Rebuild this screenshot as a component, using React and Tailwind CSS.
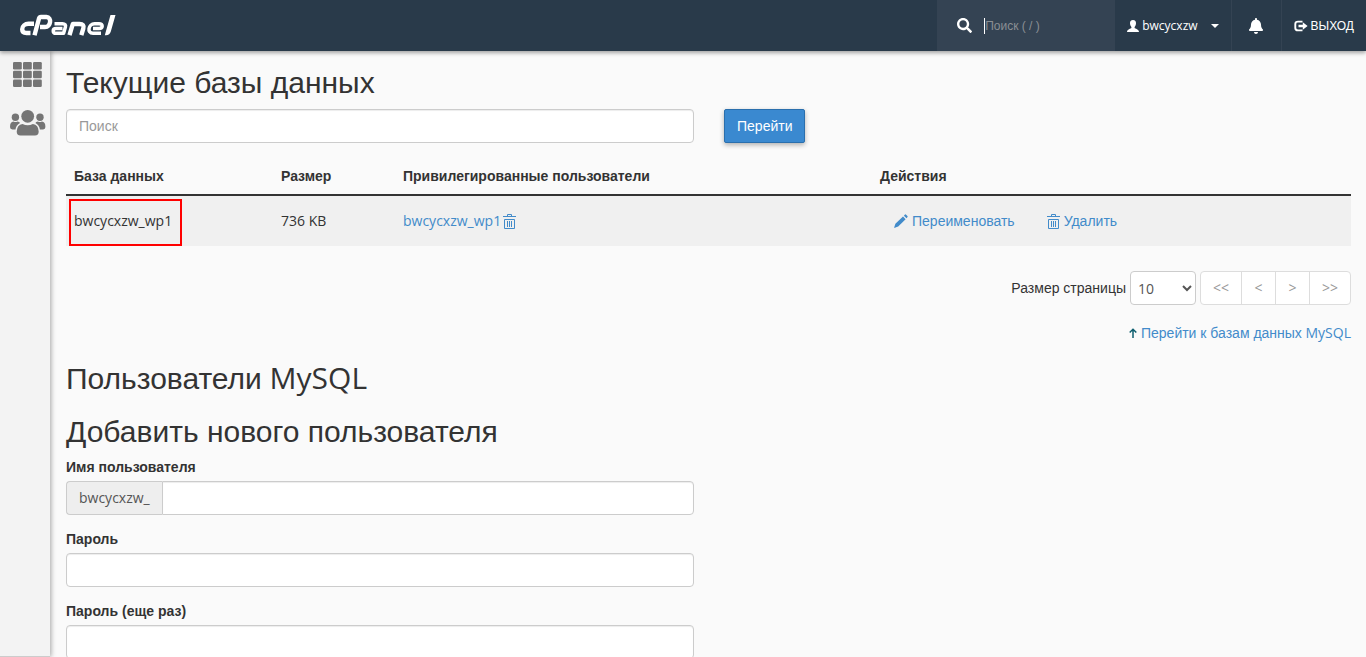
import { FaSearch, FaBell } from "react-icons/fa";

const MIXED = "font-['Open_Sans','Liberation_Sans',sans-serif]";
const CYR = "font-['Liberation_Sans',Arial,sans-serif]";

const INPUT =
  "h-[34px] w-full rounded border border-[#cccccc] bg-white px-3 text-sm text-[#555555] shadow-[inset_0_1px_1px_rgba(0,0,0,0.075)] outline-none";

const Logo = () => (
  <svg viewBox="0 0 96 24" className="h-6 w-24" fill="none" stroke="#fff" strokeWidth="4.4" strokeLinejoin="round" aria-label="cPanel">
    <path d="M14 9.800H8.500C5 9.800 2.200 12 2.200 15.300C2.200 17.800 4 19 6.500 19H10.500" />
    <path d="M14.500 21.200L19 4.500Q19.500 3 21 3H26.500C32 3 31 13 25 13H20" />
    <path d="M34.500 9.700H42.500C45 9.700 46 11 45.400 13L43.600 19.300H36C32.300 19.300 32.300 14.500 36 14.500H42.500" strokeWidth="3.500" />
    <path d="M49.500 21.200L52.800 10H59.500C63 10 64.200 11.500 63.300 14.500L61.300 21.200" />
    <path d="M81 19.200H73C66.500 19.200 68.500 9.700 74.500 9.700H79C83.500 9.700 83 14.500 79 14.500H73" strokeWidth="3.500" />
    <path d="M90.500 1H95.500L90.800 17.500Q89.800 21.200 86 21.200H84.800Z" fill="#fff" stroke="none" />
  </svg>
);

const GridIcon = () => (
  <svg viewBox="0 0 29 25" className="h-[25px] w-[29px]" fill="#757575">
    {[0, 8.7, 17.4].map((y) =>
      [0, 10, 20].map((x) => <rect key={`${x}-${y}`} x={x} y={y} width="8.8" height="7.6" rx="1.3" />)
    )}
  </svg>
);

const UsersIcon = () => (
  <svg viewBox="0 0 36 28" className="h-7 w-9" fill="#757575">
    <circle cx="17.7" cy="7.300" r="6.400" />
    <circle cx="5.400" cy="8.300" r="3.700" />
    <circle cx="30" cy="8.300" r="3.700" />
    <path d="M6.700 22.500Q7 15.500 12.500 15Q17.700 17.600 22.900 15Q28.400 15.500 28.700 22.500Q28.700 26.600 25 26.600H10.400Q6.700 26.600 6.700 22.500Z" />
    <path d="M0 18Q0 12.800 3.500 12.600Q5.500 13.600 7.500 12.600Q9.500 12.800 10 14Q6 16.500 5.500 20.400H2.300Q0 20.400 0 18Z" />
    <path d="M35.400 18Q35.400 12.800 31.900 12.600Q29.900 13.600 27.900 12.600Q25.900 12.800 25.400 14Q29.400 16.500 29.900 20.400H33.100Q35.400 20.400 35.400 18Z" />
  </svg>
);

const UserIcon = () => (
  <svg viewBox="0 0 12 12" className="h-3 w-3" fill="currentColor">
    <path d="M6 0C8.200 0 9.100 1.500 9 3.500C8.900 5.400 8 6.300 7.600 7V8C8.200 8.700 11.900 9.300 12 12H0C.1 9.300 3.800 8.700 4.400 8V7C4 6.300 3.100 5.400 3 3.500C2.900 1.500 3.800 0 6 0Z" />
  </svg>
);

const LogoutIcon = () => (
  <svg viewBox="0 0 14 12" className="h-3 w-3.5" fill="currentColor">
    <path d="M8.500 1.600H4Q1.300 1.600 1.300 4V8Q1.300 10.400 4 10.400H8.500" fill="none" stroke="currentColor" strokeWidth="1.900" />
    <path d="M4.500 4.700H8.800V2.200L13.600 6L8.800 9.800V7.300H4.500Z" />
  </svg>
);

const TrashIcon = () => (
  <svg viewBox="0 0 13 15" className="h-[15px] w-[13px] shrink-0" fill="none" stroke="currentColor">
    <path d="M4.500 2.500V.5H8.500V2.500M0 2.500H13" />
    <path d="M1.500 5.500H11.500V14.500H1.500ZM4.500 7V13M6.500 7V13M8.500 7V13" />
  </svg>
);

const PencilIcon = () => (
  <svg viewBox="0 0 14 14" className="h-3.5 w-3.5 shrink-0" fill="currentColor">
    <path d="M0 14L1.400 9.800L9 2.600L11.600 5.200L4.200 12.600ZM9.900 1.700L11 .6Q11.500.1 12.100.7L13.400 2Q14 2.600 13.500 3.100L12.500 4.200Z" />
  </svg>
);

const UpArrow = () => (
  <svg viewBox="0 0 8 10" className="h-2.5 w-2 shrink-0" fill="none" stroke="#0f5f6f" strokeWidth="1.500">
    <path d="M4 10V1M.7 4.500L4 1.200L7.300 4.500" />
  </svg>
);

const Header = () => (
  <header className="relative z-20 flex h-[51px] shrink-0 items-stretch bg-[#293a4a] text-white shadow-[0_2px_4px_rgba(0,0,0,0.35)]">
    <a href="#home" className="flex items-center pl-5">
      <Logo />
    </a>
    <div className="ml-auto flex w-[178px] items-center gap-3 bg-[#344353] pl-5">
      <FaSearch className="h-[15px] w-[15px]" />
      <input
        type="text"
        aria-label="Поиск"
        placeholder="Поиск ( / )"
        className={`h-4 w-32 border-l border-white bg-transparent text-xs outline-none placeholder:text-[#8b8f94] ${CYR}`}
      />
    </div>
    <button type="button" className="flex items-center gap-[3px] px-3 text-xs">
      <UserIcon />
      <span>bwcycxzw</span>
      <span className="ml-2.5 border-x-4 border-t-4 border-x-transparent border-t-white" />
    </button>
    <button type="button" aria-label="Уведомления" className="flex w-[50px] items-center justify-center border-l border-[#344353]">
      <FaBell className="h-4 w-4" />
    </button>
    <a href="#logout" className={`flex items-center gap-[3px] border-l border-[#344353] px-3 text-xs ${CYR}`}>
      <LogoutIcon />
      ВЫХОД
    </a>
  </header>
);

const Sidebar = () => (
  <nav className="flex w-[50px] shrink-0 flex-col items-center gap-[22px] border-b border-[#cccccc] bg-[#f3f3f3] pt-[11px] pl-[5px] shadow-[1px_0_5px_rgba(0,0,0,0.35)]">
    <a href="#tools" aria-label="Инструменты">
      <GridIcon />
    </a>
    <a href="#users" aria-label="Пользователи">
      <UsersIcon />
    </a>
  </nav>
);

const Field = ({ id, label, type = "text", prefix }) => (
  <div className="mb-[15px]">
    <label htmlFor={id} className={`mb-1 block text-sm leading-[19px] font-bold ${CYR}`}>
      {label}
    </label>
    <div className="flex">
      {prefix && (
        <span className="flex items-center rounded-l border border-r-0 border-[#cccccc] bg-[#eeeeee] px-3 text-sm text-[#555555]">
          {prefix}
        </span>
      )}
      <input id={id} type={type} className={prefix ? `${INPUT} rounded-l-none` : INPUT} />
    </div>
  </div>
);

const DatabaseTable = () => (
  <table className="mt-[15px] w-full table-fixed border-collapse text-left text-sm leading-5">
    <thead className={CYR}>
      <tr className="border-b-2 border-[#333333]">
        <th className="w-[207px] px-2 py-2">База данных</th>
        <th className="w-[122px] px-2 py-2">Размер</th>
        <th className="w-[477px] px-2 py-2">Привилегированные пользователи</th>
        <th className="px-2 py-2">Действия</th>
      </tr>
    </thead>
    <tbody>
      <tr className="bg-[#f0f0f0]">
        <td className="px-[3px] pt-[3px]">
          <div className="w-fit border-2 border-[#ff0000] pt-[10px] pr-2 pb-[13px] pl-[3px]">bwcycxzw_wp1</div>
        </td>
        <td className="px-2">736 KB</td>
        <td className="px-2">
          <span className="flex items-center gap-0.5 text-[#428bca]">
            <a href="#user">bwcycxzw_wp1</a>
            <button type="button" aria-label="Удалить пользователя">
              <TrashIcon />
            </button>
          </span>
        </td>
        <td className="px-2">
          <div className={`flex gap-8 pl-3.5 text-[#428bca] ${CYR}`}>
            <a href="#rename" className="flex items-center gap-1">
              <PencilIcon />
              Переименовать
            </a>
            <a href="#delete" className="flex items-center gap-1">
              <TrashIcon />
              Удалить
            </a>
          </div>
        </td>
      </tr>
    </tbody>
  </table>
);

const Pager = () => (
  <div className="mt-[25px] flex items-center justify-end gap-1 text-sm">
    <label htmlFor="page-size" className={CYR}>
      Размер страницы
    </label>
    <select id="page-size" className="h-[34px] w-[66px] rounded border border-[#cccccc] bg-white pl-[3px] text-[#555555]">
      <option>10</option>
    </select>
    <div className="flex divide-x divide-[#dddddd] rounded border border-[#dddddd] bg-white text-[#999999]">
      {["<<", "<", ">", ">>"].map((label) => (
        <button key={label} type="button" className="h-8 min-w-[34px] px-3">
          {label}
        </button>
      ))}
    </div>
  </div>
);

export default function App() {
  return (
    <div className={`flex h-screen flex-col overflow-hidden bg-[#fafafa] text-[#333333] ${MIXED}`}>
      <Header />
      <div className="flex min-h-0 flex-1">
        <Sidebar />
        <main className="min-w-0 flex-1 overflow-hidden pt-[15px] pr-[15px] pl-4">
          <h2 className={`text-[30px] leading-[33px] ${CYR}`}>Текущие базы данных</h2>
          <form className="mt-[10px] flex gap-[30px]" onSubmit={(e) => e.preventDefault()}>
            <input type="text" aria-label="Поиск" placeholder="Поиск" className={`${INPUT} max-w-[628px] placeholder:text-[#999999] ${CYR}`} />
            <button
              type="submit"
              className={`h-[34px] rounded-xs border border-[#2a6fad] bg-[#3a89d0] px-3 text-sm text-white shadow-[0_2px_5px_rgba(0,0,0,0.3)] ${CYR}`}
            >
              Перейти
            </button>
          </form>
          <DatabaseTable />
          <Pager />
          <a href="#top" className="mt-[18px] flex items-center justify-end gap-1 text-sm text-[#428bca]">
            <UpArrow />
            <span>
              <span className={CYR}>Перейти к базам данных</span> MySQL
            </span>
          </a>
          <h2 className="mt-[18px] text-[30px] leading-[33px]">
            <span className={CYR}>Пользователи</span> MySQL
          </h2>
          <h2 className={`mt-5 text-[30px] leading-[33px] ${CYR}`}>Добавить нового пользователя</h2>
          <form className="mt-[10px] max-w-[628px]">
            <Field id="username" label="Имя пользователя" prefix="bwcycxzw_" />
            <Field id="password" label="Пароль" type="password" />
            <Field id="password-again" label="Пароль (еще раз)" type="password" />
          </form>
        </main>
      </div>
    </div>
  );
}
